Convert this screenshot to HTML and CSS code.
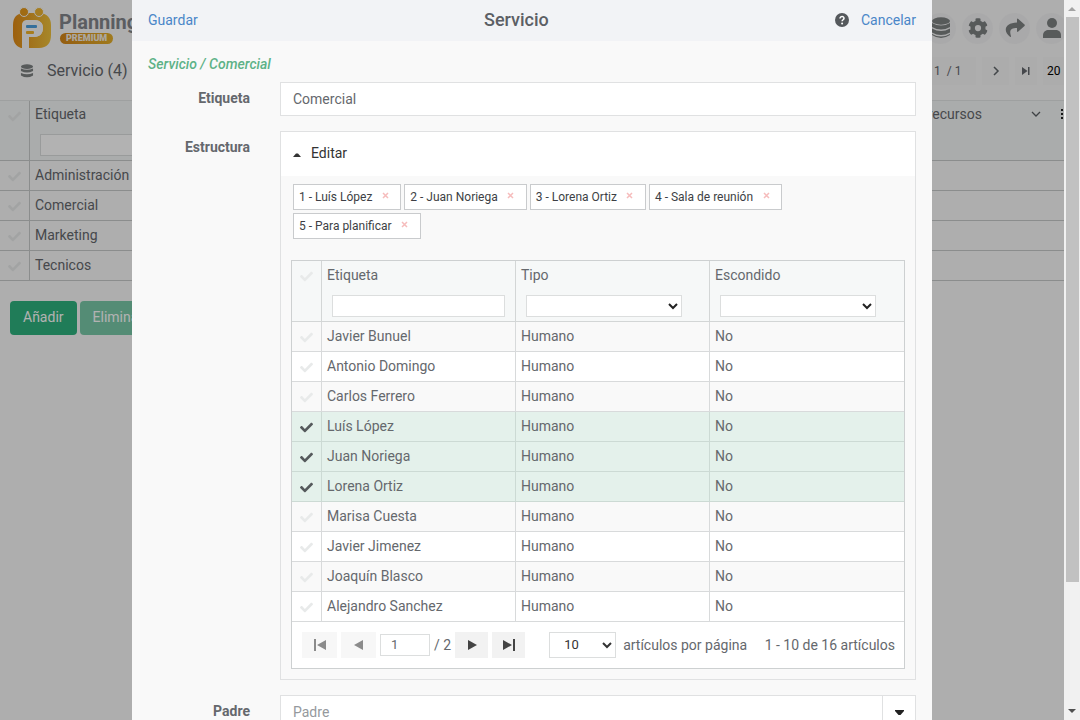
FILE: index.html
```html
<!DOCTYPE html>
<html lang="es">
<head>
<meta charset="utf-8">
<title>Servicio</title>
<link rel="stylesheet" href="styles.css">
</head>
<body>
<div class="shell">
  <div class="page">
    <header class="topbar">
      <svg class="logo" width="40" height="42" viewBox="0 0 40 42" aria-hidden="true">
        <defs><linearGradient id="gold" x1="0" y1="0" x2="1" y2="0"><stop offset="0" stop-color="#e08a16"/><stop offset="1" stop-color="#efc23c"/></linearGradient></defs>
        <path d="M9 41C3 39 1 34 1 28V18C1 10 5 6 13 6h14c8 0 12 5 12 12v10c0 8-4 13-12 13H17V30h5c6 0 9-4 9-9s-3-8-9-8h-6c-4 0-6 2-6 6v22z" fill="url(#gold)"/>
        <circle cx="12" cy="5" r="4.500" fill="#e59a1c" stroke="#f9f9f9"/><circle cx="27" cy="5" r="4.500" fill="#ecb431" stroke="#f9f9f9"/>
        <path d="M10 41V19c0-4 2-6 6-6h6c6 0 9 3 9 8s-3 9-9 9h-5v11z" fill="#f9f9f9"/>
        <rect x="14" y="18" width="11" height="3" rx="1" fill="#4ba0df"/><rect x="14" y="24" width="8" height="3" rx="1" fill="#f0b42c"/>
      </svg>
      <div class="brand"><span class="brand-name">Planning</span><span class="brand-tag">PREMIUM</span></div>
      <nav class="actions">
        <button class="round" aria-label="Datos"><svg width="20" height="22" viewBox="0 0 20 22"><ellipse cx="10" cy="4" rx="9" ry="3.700"/><path d="M1 6q9 5 18 0v4q-9 5-18 0zM1 11.500q9 5 18 0v4q-9 5-18 0zM1 17q9 5 18 0v1q-9 6-18 0z"/></svg></button>
        <button class="round" aria-label="Ajustes"><svg width="20" height="20" viewBox="0 0 512 512"><path d="M487.400 315.700l-42.600-24.600c4.300-23.200 4.300-47 0-70.200l42.600-24.600c4.900-2.800 7.100-8.600 5.500-14-11.100-35.600-30-67.800-54.700-94.600-3.800-4.100-10-5.100-14.800-2.300L380.800 110c-17.900-15.400-38.500-27.300-60.800-35.100V25.800c0-5.600-3.900-10.500-9.400-11.700-36.700-8.200-74.300-7.800-109.200 0-5.500 1.200-9.400 6.100-9.400 11.700V75c-22.200 7.900-42.800 19.800-60.800 35.100L88.700 85.500c-4.900-2.800-11-1.900-14.800 2.300-24.700 26.700-43.600 58.900-54.700 94.600-1.700 5.400.6 11.200 5.500 14L67.300 221c-4.300 23.200-4.300 47 0 70.200l-42.600 24.600c-4.900 2.800-7.100 8.600-5.500 14 11.100 35.600 30 67.800 54.700 94.600 3.800 4.100 10 5.100 14.800 2.300l42.600-24.600c17.900 15.400 38.500 27.300 60.800 35.100v49.200c0 5.600 3.900 10.500 9.400 11.700 36.700 8.200 74.300 7.800 109.200 0 5.500-1.200 9.400-6.100 9.400-11.700v-49.200c22.200-7.900 42.800-19.800 60.800-35.100l42.600 24.600c4.900 2.800 11 1.900 14.800-2.300 24.700-26.700 43.600-58.900 54.700-94.600 1.500-5.500-.7-11.300-5.600-14.100zM256 336a80 80 0 1 1 0-160 80 80 0 0 1 0 160z"/></svg></button>
        <button class="round" aria-label="Compartir"><svg width="20" height="20" viewBox="0 0 20 20"><path d="M12 1.500q0-1.500 1.300-.5l6.200 5.600q.7.700 0 1.400l-6.200 5.600q-1.300.9-1.300-.6v-3C6 10 4 12 6 18.300q0 1-1 .4C-2.500 13 0 4.800 12 4.500z"/></svg></button>
        <button class="round" aria-label="Usuario"><svg width="20" height="20" viewBox="0 0 20 20"><circle cx="10" cy="5" r="5"/><path d="M1 20v-2.500C1 13.500 4 12 6.500 12h7c3 0 5.500 1.500 5.500 5.500V20z"/></svg></button>
      </nav>
    </header>
    <div class="toolbar">
      <svg class="stack" width="14" height="14" viewBox="0 0 20 22"><ellipse cx="10" cy="4" rx="9.500" ry="3.700"/><path d="M.5 7q9.500 4 19 0v4q-9.500 5-19 0zM.5 14q9.500 4 19 0v4q-9.500 6-19 0z"/></svg>
      <h1>Servicio (4)</h1>
      <div class="paging">
        <span class="box pages">1&nbsp; / 1</span>
        <button class="box next" aria-label="Siguiente"><svg width="8" height="10" viewBox="0 0 8 10"><path d="M2 1l4 4-4 4" fill="none" stroke="#60666a" stroke-width="1.500"/></svg></button>
        <button class="box last" aria-label="Última"><svg width="8" height="8" viewBox="0 0 8 8"><path d="M0 0l5.500 4L0 8zM6 0h1.500v8H6z"/></svg></button>
        <span class="box size">20</span>
      </div>
    </div>
    <table class="grid back">
      <colgroup><col class="c-check"><col class="c-main"><col></colgroup>
      <thead><tr>
        <th><input class="tick" type="checkbox" aria-label="Todos"></th>
        <th><div class="th-title">Etiqueta</div><input class="filter" aria-label="Filtrar etiqueta"></th>
        <th><div class="th-title right"><span>recursos</span><svg class="chev" width="10" height="8" viewBox="0 0 10 8"><path d="M1 2l4 4 4-4" fill="none" stroke="#5a5f63" stroke-width="1.300"/></svg><svg class="dots" width="2" height="10" viewBox="0 0 2 10"><path d="M0 0h2v2H0zM0 4h2v2H0zM0 8h2v2H0z"/></svg></div></th>
      </tr></thead>
      <tbody>
        <tr><td><input class="tick" type="checkbox" aria-label="Administración"></td><td>Administración</td><td></td></tr>
        <tr><td><input class="tick" type="checkbox" aria-label="Comercial"></td><td>Comercial</td><td></td></tr>
        <tr><td><input class="tick" type="checkbox" aria-label="Marketing"></td><td>Marketing</td><td></td></tr>
        <tr><td><input class="tick" type="checkbox" aria-label="Tecnicos"></td><td>Tecnicos</td><td></td></tr>
      </tbody>
    </table>
    <div class="buttons"><button class="btn">Añadir</button><button class="btn faded">Eliminar</button></div>

    <div class="overlay">
      <section class="dialog" role="dialog" aria-label="Servicio">
        <header class="dialog-head">
          <a href="#">Guardar</a>
          <h2>Servicio</h2>
          <div class="head-right"><svg width="14" height="14" viewBox="0 0 14 14" aria-hidden="true"><circle cx="7" cy="7" r="7" fill="#55585c"/><path d="M5 5.500C5 2.800 9.200 3 9 5.400 8.900 6.800 7.100 6.700 7.100 8.300" fill="none" stroke="#fff" stroke-width="1.500"/><circle cx="7.100" cy="10.400" r="1" fill="#fff"/></svg><a href="#">Cancelar</a></div>
        </header>
        <form class="form">
          <p class="crumb">Servicio / Comercial</p>
          <div class="row"><label for="name">Etiqueta</label><input class="text" id="name" value="Comercial"></div>
          <div class="row">
            <span class="label">Estructura</span>
            <div class="panel">
              <button type="button" class="panel-head"><svg width="8" height="4" viewBox="0 0 8 4"><path d="M0 4l3-3.500h2L8 4z"/></svg>Editar</button>
              <div class="panel-body">
                <div class="chips">
                  <span class="chip">1 - Luís López<button type="button" aria-label="Quitar"><svg width="7" height="7" viewBox="0 0 7 7"><path d="M1 1l5 5M6 1L1 6"/></svg></button></span>
                  <span class="chip">2 - Juan Noriega<button type="button" aria-label="Quitar"><svg width="7" height="7" viewBox="0 0 7 7"><path d="M1 1l5 5M6 1L1 6"/></svg></button></span>
                  <span class="chip">3 - Lorena Ortiz<button type="button" aria-label="Quitar"><svg width="7" height="7" viewBox="0 0 7 7"><path d="M1 1l5 5M6 1L1 6"/></svg></button></span>
                  <span class="chip">4 - Sala de reunión<button type="button" aria-label="Quitar"><svg width="7" height="7" viewBox="0 0 7 7"><path d="M1 1l5 5M6 1L1 6"/></svg></button></span>
                  <span class="chip">5 - Para planificar<button type="button" aria-label="Quitar"><svg width="7" height="7" viewBox="0 0 7 7"><path d="M1 1l5 5M6 1L1 6"/></svg></button></span>
                </div>
                <div class="grid-box">
                  <table class="grid">
                    <colgroup><col class="c-check"><col><col><col></colgroup>
                    <thead><tr>
                      <th><input class="tick" type="checkbox" aria-label="Todos"></th>
                      <th><div class="th-title">Etiqueta</div><input class="filter" aria-label="Filtrar etiqueta"></th>
                      <th><div class="th-title">Tipo</div><select class="filter short" aria-label="Filtrar tipo"><option></option></select></th>
                      <th><div class="th-title">Escondido</div><select class="filter short" aria-label="Filtrar escondido"><option></option></select></th>
                    </tr></thead>
                    <tbody>
                      <tr><td><input class="tick" type="checkbox" aria-label="Javier Bunuel"></td><td>Javier Bunuel</td><td>Humano</td><td>No</td></tr>
                      <tr><td><input class="tick" type="checkbox" aria-label="Antonio Domingo"></td><td>Antonio Domingo</td><td>Humano</td><td>No</td></tr>
                      <tr><td><input class="tick" type="checkbox" aria-label="Carlos Ferrero"></td><td>Carlos Ferrero</td><td>Humano</td><td>No</td></tr>
                      <tr class="on"><td><input class="tick" type="checkbox" checked aria-label="Luís López"></td><td>Luís López</td><td>Humano</td><td>No</td></tr>
                      <tr class="on"><td><input class="tick" type="checkbox" checked aria-label="Juan Noriega"></td><td>Juan Noriega</td><td>Humano</td><td>No</td></tr>
                      <tr class="on"><td><input class="tick" type="checkbox" checked aria-label="Lorena Ortiz"></td><td>Lorena Ortiz</td><td>Humano</td><td>No</td></tr>
                      <tr><td><input class="tick" type="checkbox" aria-label="Marisa Cuesta"></td><td>Marisa Cuesta</td><td>Humano</td><td>No</td></tr>
                      <tr><td><input class="tick" type="checkbox" aria-label="Javier Jimenez"></td><td>Javier Jimenez</td><td>Humano</td><td>No</td></tr>
                      <tr><td><input class="tick" type="checkbox" aria-label="Joaquín Blasco"></td><td>Joaquín Blasco</td><td>Humano</td><td>No</td></tr>
                      <tr><td><input class="tick" type="checkbox" aria-label="Alejandro Sanchez"></td><td>Alejandro Sanchez</td><td>Humano</td><td>No</td></tr>
                    </tbody>
                  </table>
                  <div class="pager">
                    <button type="button" disabled aria-label="Primera"><svg width="12" height="12" viewBox="0 0 12 12"><path d="M0 0h2v12H0zM12 1v10L3 6z"/></svg></button>
                    <button type="button" disabled aria-label="Anterior"><svg width="10" height="12" viewBox="0 0 10 12"><path d="M9 1v10L0 6z"/></svg></button>
                    <input class="page-no" value="1" aria-label="Página">
                    <span>/ 2</span>
                    <button type="button" aria-label="Siguiente"><svg width="10" height="12" viewBox="0 0 10 12"><path d="M1 1v10l9-5z"/></svg></button>
                    <button type="button" aria-label="Última"><svg width="12" height="12" viewBox="0 0 12 12"><path d="M10 0h2v12h-2zM0 1v10l9-5z"/></svg></button>
                    <select id="size" class="page-size"><option>10</option></select>
                    <label for="size">artículos por página</label>
                    <span class="total">1 - 10 de 16 artículos</span>
                  </div>
                </div>
              </div>
            </div>
          </div>
          <div class="row"><label for="parent">Padre</label><div class="combo"><input class="text" id="parent" placeholder="Padre"><button type="button" aria-label="Abrir"><svg width="9" height="5" viewBox="0 0 9 5"><path d="M0 0h9v1L5.500 5h-2L0 1z"/></svg></button></div></div>
        </form>
      </section>
    </div>
  </div>
  <div class="scrollbar" aria-hidden="true">
    <svg width="8" height="4" viewBox="0 0 8 4"><path d="M4 0l4 4H0z" fill="#a3a3a3"/></svg>
    <div class="thumb"></div>
    <svg width="8" height="4" viewBox="0 0 8 4"><path d="M0 0h8L4 4z" fill="#505050"/></svg>
  </div>
</div>
</body>
</html>
```
FILE: styles.css
```css
* { box-sizing: border-box; }
body { margin: 0; font: 14px/20px Roboto, sans-serif; color: #65686d; background: #f9f9f9; }
button, input, select { font: inherit; color: inherit; margin: 0; }
button { border: 0; padding: 0; background: none; display: flex; align-items: center; justify-content: center; }
svg { fill: currentColor; flex: none; }
a { color: #4a86c8; text-decoration: none; }

.shell { display: flex; height: 100vh; overflow: hidden; }
.page { position: relative; flex: 1; min-width: 0; overflow: hidden; }

.topbar { display: flex; align-items: center; height: 56px; padding-left: 12px; }
.brand { display: flex; flex-direction: column; align-items: flex-start; margin-left: 7px; }
.brand-name { font-size: 20px; font-weight: 700; color: #83868c; line-height: 21px; }
.brand-tag { font-size: 9px; font-weight: 900; line-height: 11px; padding: 0 6px; margin-left: 1px; border-radius: 6px; color: #f4f0e8; background: linear-gradient(90deg, #d58618, #e5b02c); }
.actions { display: flex; gap: 6px; margin-left: auto; margin-right: -3px; }
.round { width: 31px; height: 31px; border-radius: 50%; background: #f3f3f4; color: #7d8182; }

.toolbar { display: flex; align-items: center; height: 44px; padding: 0 0 14px 20px; }
.stack { color: #7d8182; }
h1 { margin: 0 0 0 13px; font-size: 16px; line-height: 22px; font-weight: 400; }
.paging { display: flex; gap: 6px; margin-left: auto; font-size: 12px; }
.box { height: 28px; line-height: 28px; background: #f6f6f6; }
.pages { width: 54px; padding-left: 12px; }
.next { width: 27px; }
.last { width: 22px; }
.size { width: 21px; padding-left: 4px; color: #000; }

.grid { width: 100%; table-layout: fixed; border-collapse: separate; border-spacing: 0; }
.c-check { width: 30px; }
.c-main { width: 200px; }
.grid th { height: 61px; padding: 4px 10px 3px; text-align: left; font-weight: 400; vertical-align: top; background: #f6f8f8; border: solid #d3d6d6; border-width: 0 1px 1px 0; }
.grid td { height: 30px; padding: 0 5px 2px; border: solid #d8dadb; border-width: 0 1px 1px 0; line-height: 20px; }
.grid th:first-child, .grid td:first-child { padding: 0; text-align: center; }
.grid th:last-child, .grid td:last-child { border-right: 0; }
.grid th:first-child { padding-top: 8px; }
.grid tbody tr { background: #fff; }
.grid tbody tr:nth-child(odd) { background: #f9f9f9; }
.grid tbody tr.on { background: #e4f1eb; }
.grid tr.on td { border-color: #ccdad4; }
.th-title { margin: 0 0 10px -5px; }
.th-title.right { display: flex; align-items: center; justify-content: flex-end; margin-right: -9px; }
.chev { margin: 0 20px 0 49px; }
.dots { color: #222; }
.filter { display: block; width: 100%; height: 22px; border: 1px solid #dcdede; background: #fff; padding: 0 4px; }
.filter.short { width: 156px; color: #222; }
.tick { appearance: none; display: block; width: 13px; height: 13px; margin: 1px auto 0; background: #e8eaea;
  -webkit-mask: url("data:image/svg+xml,%3Csvg xmlns='http://www.w3.org/2000/svg' viewBox='0 0 512 512'%3E%3Cpath d='M173.900 439.400l-166.400-166.400c-10-10-10-26.200 0-36.200l36.200-36.200c10-10 26.200-10 36.200 0L192 312.700 432.100 72.600c10-10 26.200-10 36.200 0l36.200 36.200c10 10 10 26.200 0 36.200l-294.400 294.400c-10 10-26.200 10-36.200 0z'/%3E%3C/svg%3E") center / contain no-repeat; }
.tick:checked { background: #55595c; }
.back { border-top: 1px solid #e3e5e5; }
.back th { height: 60px; padding-top: 3px; padding-bottom: 2px; background: #f4f6f6; border-color: #c8cbcb; }
.back td { border-color: #c8cbcb; }
.back tbody tr:nth-child(n) { background: #f9f9f9; }
.buttons { display: flex; gap: 3px; padding: 20px 10px; }
.btn { height: 34px; padding: 0 13px 2px; border-radius: 4px; background: #2fb27e; color: #fff; }
.btn.faded { background: #79c9a8; }

.overlay { position: absolute; inset: 0; display: flex; justify-content: center; background: rgba(0, 0, 0, .3); }
.dialog { width: 800px; max-width: 100%; height: 100%; overflow: hidden; background: #f9f9f9; }
.dialog-head { display: flex; align-items: center; justify-content: space-between; height: 41px; padding: 0 16px 2px; background: #f2f3f6; }
h2 { margin: 0; font-size: 18px; line-height: 20px; font-weight: 500; color: #5c5f65; }
.head-right { display: flex; align-items: center; gap: 12px; }
.form { padding: 13px 16px; }
.crumb { margin: 0 0 8px; font-style: italic; font-weight: 500; color: #5db287; }
.row { display: grid; grid-template-columns: 102px minmax(0, 1fr); gap: 30px; margin-bottom: 15px; }
.row > label, .row > .label { padding-top: 6px; text-align: right; font-weight: 700; }
.text { width: 100%; height: 34px; padding: 0 12px; border: 1px solid #e0e1e2; background: #fff; }
.text::placeholder { color: #95999d; opacity: 1; }
.panel { border: 1px solid #e0e1e2; }
.panel-head { width: 100%; height: 44px; padding: 0 12px 2px; justify-content: flex-start; gap: 10px; background: #fff; color: #333; }
.panel-head svg { margin-top: 4px; }
.panel-body { padding: 8px 10px 10px; }
.chips { display: flex; flex-wrap: wrap; gap: 3px; padding: 0 2px; margin-bottom: 21px; }
.chip { display: flex; align-items: center; height: 26px; padding: 0 9px 0 5px; border: 1px solid #c9cbcd; background: #fff; font-size: 12px; color: #3d3f45; }
.chip button { width: 17px; height: 20px; margin-left: 2px; padding: 0 0 3px 5px; }
.chip path { stroke: #f6bcbc; stroke-width: 1.5; }
.grid-box { border: 1px solid #cdd0d1; background: #fff; }
.pager { display: flex; align-items: center; height: 46px; padding: 0 9px 1px 10px; gap: 4px; white-space: nowrap; }
.pager button { width: 33px; height: 26px; background: #f2f2f2; color: #444; }
.pager button:disabled { width: 35px; background: #f7f7f7; color: #8b8b8b; }
.page-no { width: 50px; height: 22px; padding: 0 10px; border: 1px solid #dcdede; font-size: 13px; }
.page-size { width: 67px; height: 26px; margin: 0 3px 0 20px; padding-left: 10px; border: 1px solid #dcdede; background: #fff; font-size: 13px; color: #333; }
.total { margin-left: auto; }
.combo { display: flex; border: 1px solid #e0e1e2; background: #fff; }
.combo .text { flex: 1; height: 32px; border: 0; }
.combo button { width: 33px; border-left: 1px solid #e0e1e2; color: #222; }

.scrollbar { display: flex; flex-direction: column; align-items: center; width: 16px; padding: 7px 0; background: #f1f1f1; }
.thumb { width: 13px; height: 80%; margin: 6px 0 auto; background: #c1c1c1; }
```
